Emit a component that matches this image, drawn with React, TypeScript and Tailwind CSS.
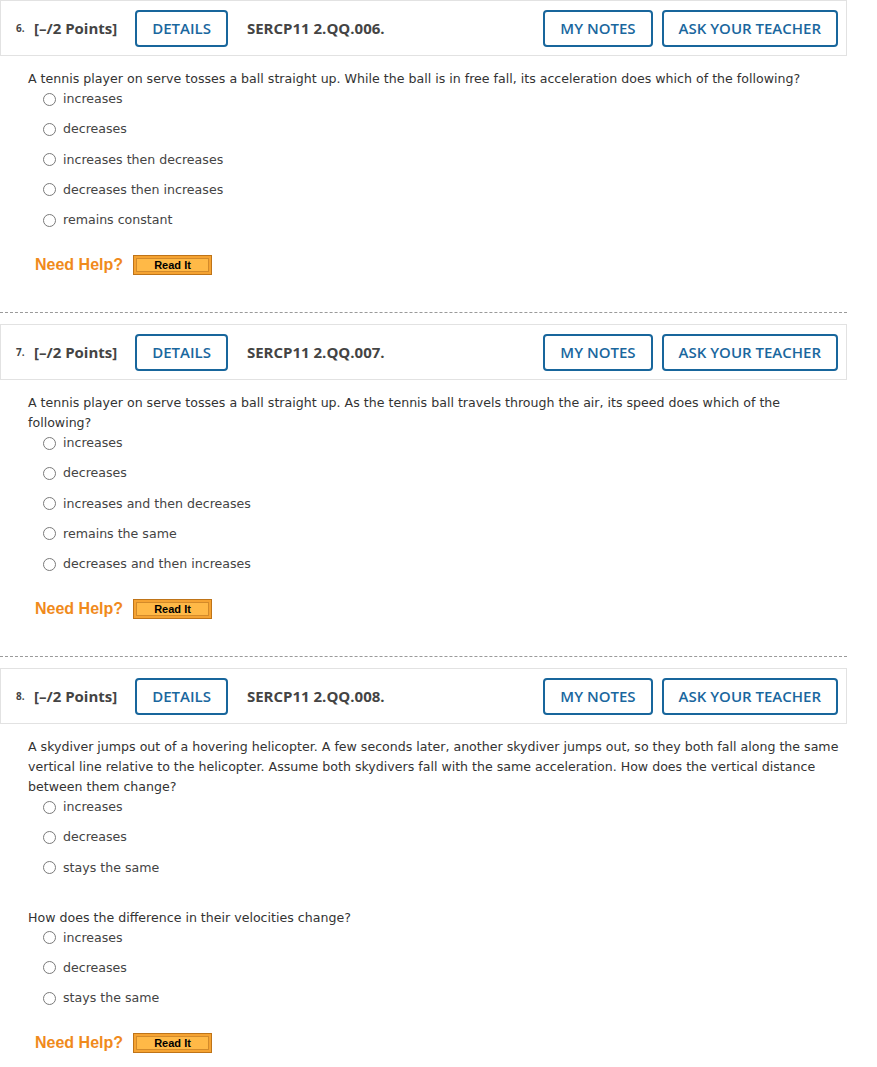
import React from 'react';

type Part = { prompt: string; options: string[] };
type Question = { num: number; code: string; parts: Part[] };

const questions: Question[] = [
  {
    num: 6,
    code: 'SERCP11 2.QQ.006.',
    parts: [
      {
        prompt:
          'A tennis player on serve tosses a ball straight up. While the ball is in free fall, its acceleration does which of the following?',
        options: ['increases', 'decreases', 'increases then decreases', 'decreases then increases', 'remains constant'],
      },
    ],
  },
  {
    num: 7,
    code: 'SERCP11 2.QQ.007.',
    parts: [
      {
        prompt:
          'A tennis player on serve tosses a ball straight up. As the tennis ball travels through the air, its speed does which of the following?',
        options: ['increases', 'decreases', 'increases and then decreases', 'remains the same', 'decreases and then increases'],
      },
    ],
  },
  {
    num: 8,
    code: 'SERCP11 2.QQ.008.',
    parts: [
      {
        prompt:
          'A skydiver jumps out of a hovering helicopter. A few seconds later, another skydiver jumps out, so they both fall along the same vertical line relative to the helicopter. Assume both skydivers fall with the same acceleration. How does the vertical distance between them change?',
        options: ['increases', 'decreases', 'stays the same'],
      },
      {
        prompt: 'How does the difference in their velocities change?',
        options: ['increases', 'decreases', 'stays the same'],
      },
    ],
  },
];

const OutlineButton = ({ label }: { label: string }) => (
  <button className="h-[37px] px-[15px] border-2 border-[#18669c] rounded-[4px] bg-white text-[15px] font-semibold text-[#1a679e] font-['Open_Sans',sans-serif] leading-none">
    {label}
  </button>
);

const Header = ({ num, code }: { num: number; code: string }) => (
  <div className="flex items-center h-[56px] border border-[#e2e2e2] pl-[15px] pr-[8px] bg-white font-['Open_Sans',sans-serif] text-[#444]">
    <span className="w-[18px] text-[10px] font-bold">{num}.</span>
    <span className="text-[15px] font-bold">[–/2 Points]</span>
    <div className="ml-[18px]">
      <OutlineButton label="DETAILS" />
    </div>
    <span className="ml-[19px] text-[15px] font-bold">{code}</span>
    <div className="flex-1" />
    <div className="flex gap-[9px]">
      <OutlineButton label="MY NOTES" />
      <OutlineButton label="ASK YOUR TEACHER" />
    </div>
  </div>
);

const Radio = ({ label }: { label: string }) => (
  <div className="flex items-center h-[20px] gap-[7px]">
    <span className="w-[13px] h-[13px] rounded-full border border-[#7a7a7a] bg-white shrink-0" />
    <span className="text-[#444]">{label}</span>
  </div>
);

const HelpRow = () => (
  <div className="flex items-center gap-[10px] pl-[7px] mt-[25px]">
    <span className="font-['Liberation_Sans',Arial,sans-serif] font-bold text-[16px] text-[#f08a1c]">Need Help?</span>
    <span className="w-[79px] h-[20px] border border-[#bf7418] bg-[#f5a332] p-[2px] flex">
      <span className="flex-1 border border-[#d38a2a] bg-[#ffb947] flex items-center justify-center font-['Liberation_Sans',Arial,sans-serif] font-bold text-[11px] text-black leading-none">
        Read It
      </span>
    </span>
  </div>
);

export default function App() {
  return (
    <div className="w-[847px] bg-white font-['DejaVu_Sans',Verdana,sans-serif] text-[12.6px] leading-[20px] text-[#333]">
      {questions.map((q, qi) => (
        <div key={q.num}>
          {qi > 0 && <div className="border-t border-dashed border-[#9a9a9a] mb-[11px]" />}
          <Header num={q.num} code={q.code} />
          <div className="pl-[28px] pt-[13px] pb-[37px]">
            {q.parts.map((p, pi) => (
              <div key={pi} className={pi > 0 ? 'mt-[30px]' : ''}>
                <p className="pr-[4px]">{p.prompt}</p>
                <div className="flex flex-col gap-[10.25px] pl-[15px]">
                  {p.options.map((o) => (
                    <Radio key={o} label={o} />
                  ))}
                </div>
              </div>
            ))}
            <HelpRow />
          </div>
        </div>
      ))}
    </div>
  );
}
